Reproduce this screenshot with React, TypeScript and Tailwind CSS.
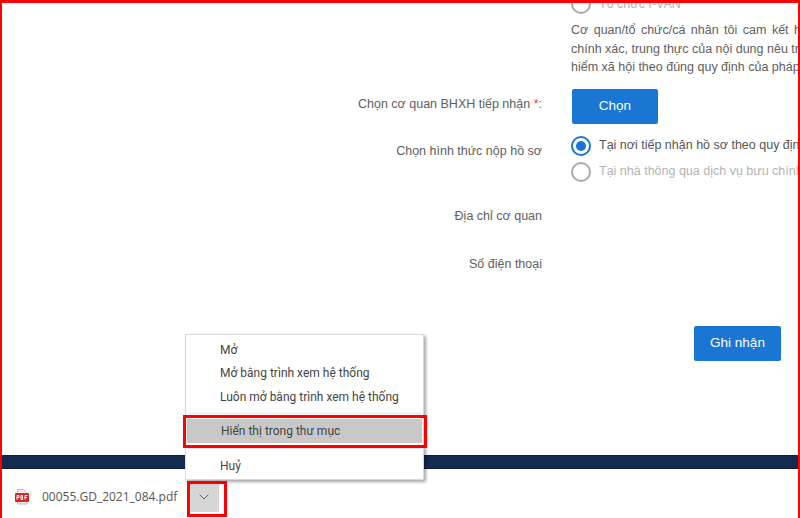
import React from "react";

const sans = "font-['Liberation_Sans',Arial,sans-serif]";
const ui = "font-['Open_Sans','Noto_Sans',sans-serif]";
const menuFont = "font-['Roboto','Noto_Sans',sans-serif]";

const Radio: React.FC<{ checked?: boolean; label: string }> = ({ checked, label }) => (
  <div className="flex items-center gap-[8px] h-[26px] whitespace-nowrap">
    <span
      className={`flex items-center justify-center w-[20px] h-[20px] rounded-full border-2 bg-white shrink-0 ${
        checked ? "border-[#1976d2]" : "border-[#a9a9a9]"
      }`}
    >
      {checked && <span className="w-[10px] h-[10px] rounded-full bg-[#1976d2]" />}
    </span>
    <span className={checked ? "text-[#555]" : "text-[#b3b3b3]"}>{label}</span>
  </div>
);

const FormRow: React.FC<{ label: React.ReactNode; className?: string; children?: React.ReactNode }> = ({
  label,
  className,
  children,
}) => (
  <div className={`flex ${className ?? ""}`}>
    <div className="w-[542px] shrink-0 text-right text-[#606060] whitespace-nowrap">{label}</div>
    <div className="ml-[29px] min-w-0 flex-1">{children}</div>
  </div>
);

const MenuItem: React.FC<{ label: string; className?: string }> = ({ label, className }) => (
  <div className={`pl-[34px] flex items-center text-[#444] ${className ?? ""}`}>{label}</div>
);

export default function App() {
  return (
    <div className={`relative w-[800px] h-[518px] overflow-hidden bg-white flex flex-col text-[12.5px] ${sans}`}>
      <main className="h-[455px] shrink-0 overflow-hidden flex flex-col">
        <FormRow label="" className="-mt-[9px]">
          <Radio label="Tổ chức I-VAN" />
          <div className="mt-[4px] text-[#606060] leading-[18.5px] whitespace-nowrap overflow-hidden">
            <div className="[word-spacing:2px]">Cơ quan/tổ chức/cá nhân tôi cam kết hoàn toàn</div>
            <div>chính xác, trung thực của nội dung nêu trên và</div>
            <div>hiểm xã hội theo đúng quy định của pháp luật</div>
          </div>
        </FormRow>
        <FormRow
          label={
            <span className="block pt-[6px]">
              Chọn cơ quan BHXH tiếp nhận <span className="text-[#e53935]">*</span>:
            </span>
          }
          className="mt-[12px] items-start"
        >
          <button className="ml-[1px] w-[86px] h-[35px] rounded-[2px] bg-[#1976d2] text-white text-[13.5px]">Chọn</button>
        </FormRow>
        <FormRow label={<span className="block mt-[9px]">Chọn hình thức nộp hồ sơ</span>} className="mt-[9px]">
          <Radio checked label="Tại nơi tiếp nhận hồ sơ theo quy định của pháp luật" />
          <Radio label="Tại nhà thông qua dịch vụ bưu chính công ích" />
        </FormRow>
        <FormRow label="Địa chỉ cơ quan" className="mt-[22px]" />
        <FormRow label="Số điện thoại" className="mt-[30px]" />
        <div className="mt-[52px] flex justify-end pr-[19px]">
          <button className="w-[87px] h-[35px] rounded-[2px] bg-[#1976d2] text-white text-[13.5px]">Ghi nhận</button>
        </div>
      </main>

      <div className="h-[14px] shrink-0 bg-[#132b4f] border-y border-y-[#0d1f3a]" />

      <footer className={`flex-1 flex items-center pl-[15px] pt-[7px] text-[12px] text-[#555] ${ui}`}>
        <svg width="14" height="16" viewBox="0 0 14 16" className="shrink-0">
          <path d="M2.5.5h6l3.5 3.5v11h-9.5z" fill="#eee" stroke="#bbb" />
          <rect y="4" width="14" height="9" rx="1" fill="#d9262c" />
          <path d="M2 6.5v4M2 6.5h2v2H2M6 6.5v4h1.5v-4zM10 6.5v4M10 6.5h2.5M10 8.5h2" fill="none" stroke="#fff" strokeWidth="1" />
        </svg>
        <span className="ml-[13px] whitespace-nowrap">00055.GD_2021_084.pdf</span>
        <div className="ml-[12px] w-[30px] h-[30px] bg-[#d6d6d6] flex items-center justify-center">
          <svg width="10" height="6" viewBox="0 0 10 6" fill="none" stroke="#666" strokeWidth="1">
            <path d="M.5.5 5 5 9.5.5" />
          </svg>
        </div>
      </footer>

      <div className={`absolute left-[185px] top-[334px] w-[239px] h-[146px] bg-white border border-[#d8d8d8] shadow-[2px_2px_3px_rgba(0,0,0,0.35)] text-[12px] flex flex-col ${menuFont}`}>
        <MenuItem label="Mở" className="h-[23px] mt-[3px]" />
        <MenuItem label="Mở bằng trình xem hệ thống" className="h-[24px]" />
        <MenuItem label="Luôn mở bằng trình xem hệ thống" className="h-[23px]" />
        <div className="mt-[5px] mb-[5px] mx-[2px] h-px bg-[#e3e3e3]" />
        <MenuItem label="Hiển thị trong thư mục" className="h-[24px] bg-[#c8c8c8] mx-[1px] pl-[33px]" />
        <div className="mt-[5px] mb-[5px] mx-[2px] h-px bg-[#e3e3e3]" />
        <MenuItem label="Huỷ" className="h-[23px] text-[#9a9a9a]" />
      </div>

      {/* red annotation frames */}
      <div className="absolute inset-x-0 top-0 h-[3px] bg-[#ff0000]" />
      <div className="absolute inset-y-0 left-0 w-[2px] bg-[#ff0000]" />
      <div className="absolute inset-y-0 right-0 w-[2px] bg-[#ff0000]" />
      <div className="absolute left-[183px] top-[415px] w-[244px] h-[33px] border-[3px] border-[#ff0000]" />
      <div className="absolute left-[187px] top-[481px] w-[40px] h-[36px] border-[3px] border-[#ff0000]" />
    </div>
  );
}
